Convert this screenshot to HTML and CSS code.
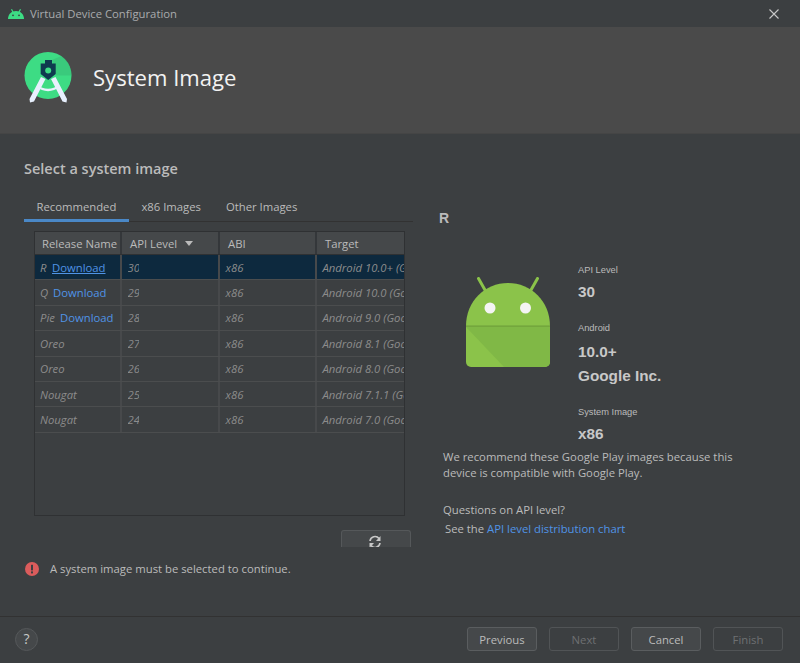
FILE: index.html
```html
<!DOCTYPE html>
<html lang="en">
<head>
    <meta charset="UTF-8">
    <meta name="viewport" content="width=device-width, initial-scale=1.0">
    <title>Virtual Device Configuration</title>
    <link rel="stylesheet" href="styles.css">
</head>
<body>
    <div class="dialog">
        <div class="titlebar">
            <svg class="titlebar-icon" viewBox="0 0 16 10" width="16" height="10">
                <path d="M0 10C0 5 3.500 2 8 2S16 5 16 10Z" fill="#3ddc84"/>
                <path d="M3.500 0.300 5.500 4M12.500 0.300 10.500 4" stroke="#3ddc84" stroke-width="1.200" fill="none"/>
                <circle cx="5" cy="6.300" r="0.900" fill="#3c3f41"/>
                <circle cx="11" cy="6.300" r="0.900" fill="#3c3f41"/>
            </svg>
            <span class="titlebar-text">Virtual Device Configuration</span>
            <svg class="close-icon" viewBox="0 0 10 10" width="10" height="10">
                <path d="M0.500 0.500 9.500 9.500M9.500 0.500 0.500 9.500" stroke="#c8c8c8" stroke-width="1.100" fill="none"/>
            </svg>
        </div>

        <div class="header">
            <svg class="logo" viewBox="0 0 48 51" width="48" height="51">
                <circle cx="24" cy="23.500" r="23.500" fill="#3ddc84"/>
                <path d="M28 8 37.500 4A23.500 23.500 0 0 1 47.500 23.500H32Z" fill="#37b874" opacity="0.5"/>
                <path d="M14.300 33C18 38 30 38 34 33L35 35C30 40.500 18 40.500 13.300 35Z" fill="#e8f0fe"/>
                <path d="M17 25 21.500 27 10 49.500 6 50.500 5.500 47ZM31.500 25 27 27 38.500 49.500 42.500 50.500 43 47Z" fill="#e8f0fe"/>
                <path d="M21 8H28V11.500H31.700V22L24.200 28 16.700 22V11.500H21Z" fill="#0f3a4f"/>
                <circle cx="24.200" cy="18.500" r="3" fill="#3ddc84"/>
            </svg>
            <h1>System Image</h1>
        </div>

        <div class="content">
            <div class="left-col">
                <h2>Select a system image</h2>
                <div class="tabs">
                    <span class="tab active">Recommended</span>
                    <span class="tab">x86 Images</span>
                    <span class="tab">Other Images</span>
                </div>
                <div class="table">
                    <div class="row head">
                        <div class="cell">Release Name</div>
                        <div class="cell">API Level <span class="sort-arrow"></span></div>
                        <div class="cell">ABI</div>
                        <div class="cell">Target</div>
                    </div>
                    <div class="row selected">
                        <div class="cell"><span class="clip w-r">R</span><a class="link underlined">Download</a></div>
                        <div class="cell"><span class="clip w-api">30</span></div>
                        <div class="cell">x86</div>
                        <div class="cell">Android 10.0+ (Google Play)</div>
                    </div>
                    <div class="row">
                        <div class="cell"><span class="clip w-q">Q</span><a class="link">Download</a></div>
                        <div class="cell"><span class="clip w-api">29</span></div>
                        <div class="cell">x86</div>
                        <div class="cell">Android 10.0 (Google Play)</div>
                    </div>
                    <div class="row">
                        <div class="cell"><span class="clip w-pie">Pie</span><a class="link">Download</a></div>
                        <div class="cell"><span class="clip w-api">28</span></div>
                        <div class="cell">x86</div>
                        <div class="cell">Android 9.0 (Google Play)</div>
                    </div>
                    <div class="row">
                        <div class="cell"><span class="clip w-oreo">Oreo</span></div>
                        <div class="cell"><span class="clip w-api">27</span></div>
                        <div class="cell">x86</div>
                        <div class="cell">Android 8.1 (Google Play)</div>
                    </div>
                    <div class="row">
                        <div class="cell"><span class="clip w-oreo">Oreo</span></div>
                        <div class="cell"><span class="clip w-api">26</span></div>
                        <div class="cell">x86</div>
                        <div class="cell">Android 8.0 (Google Play)</div>
                    </div>
                    <div class="row">
                        <div class="cell"><span class="clip w-nougat">Nougat</span></div>
                        <div class="cell"><span class="clip w-api">25</span></div>
                        <div class="cell">x86</div>
                        <div class="cell">Android 7.1.1 (Google Play)</div>
                    </div>
                    <div class="row">
                        <div class="cell"><span class="clip w-nougat">Nougat</span></div>
                        <div class="cell"><span class="clip w-api">24</span></div>
                        <div class="cell">x86</div>
                        <div class="cell">Android 7.0 (Google Play)</div>
                    </div>
                </div>
                <div class="refresh-row">
                    <div class="refresh-btn">
                        <svg viewBox="0 0 14 14" width="14" height="14">
                            <path d="M2 6A5 5 0 0 1 11 3.600" stroke="#c8c8c8" stroke-width="1.700" fill="none"/>
                            <path d="M12.500 1V6H8Z" fill="#c8c8c8"/>
                            <path d="M12 8A5 5 0 0 1 3 10.400" stroke="#c8c8c8" stroke-width="1.700" fill="none"/>
                            <path d="M1.500 13V8H6Z" fill="#c8c8c8"/>
                        </svg>
                    </div>
                </div>
                <div class="status">
                    <svg viewBox="0 0 14 14" width="14" height="14">
                        <circle cx="7" cy="7" r="7" fill="#db5c5c"/>
                        <rect x="6" y="2.800" width="2" height="5.600" fill="#3c3f41"/>
                        <rect x="6" y="9.400" width="2" height="2" fill="#3c3f41"/>
                    </svg>
                    <span>A system image must be selected to continue.</span>
                </div>
            </div>

            <div class="right-col">
                <div class="release-title">R</div>
                <div class="details">
                    <svg class="robot" viewBox="0 0 84 91" width="84" height="91">
                        <path d="M12.500 1.500 19 13M71.500 1.500 65 13" stroke="#8bc34a" stroke-width="3" stroke-linecap="round"/>
                        <path d="M0 49C0 24 19 6 42 6S84 24 84 49V85A5 5 0 0 1 79 90H5A5 5 0 0 1 0 85Z" fill="#8bc34a"/>
                        <path d="M0 49H84V85A5 5 0 0 1 79 90H38L0 50Z" fill="#80b846"/>
                        <rect x="0" y="48.500" width="84" height="1.200" fill="#6fa03a"/>
                        <circle cx="24" cy="31" r="5.500" fill="#f4f4f4"/>
                        <circle cx="59.500" cy="31" r="5.500" fill="#f4f4f4"/>
                    </svg>
                    <div class="info">
                        <div class="info-label">API Level</div>
                        <div class="info-value api-value">30</div>
                        <div class="info-label android-label">Android</div>
                        <div class="info-value version-value">10.0+</div>
                        <div class="info-value vendor">Google Inc.</div>
                        <div class="info-label image-label">System Image</div>
                        <div class="info-value api-value">x86</div>
                    </div>
                </div>
                <p class="recommend">We recommend these Google Play images because this device is compatible with Google Play.</p>
                <p class="questions">Questions on API level?</p>
                <p class="see">See the <a class="link">API level distribution chart</a></p>
            </div>
        </div>

        <div class="footer">
            <div class="help">?</div>
            <div class="buttons">
                <button class="btn">Previous</button>
                <button class="btn disabled">Next</button>
                <button class="btn">Cancel</button>
                <button class="btn disabled">Finish</button>
            </div>
        </div>
    </div>
</body>
</html>
```

FILE: styles.css
```css
* {
    margin: 0;
    padding: 0;
    box-sizing: border-box;
}

html, body {
    width: 800px;
    height: 663px;
    overflow: hidden;
}

body {
    font-family: "Open Sans", "Noto Sans", sans-serif;
    font-size: 11.300px;
    color: #bbbbbb;
    background: #3c3f41;
}

.dialog {
    height: 663px;
    display: flex;
    flex-direction: column;
}

.titlebar {
    height: 27px;
    display: flex;
    align-items: center;
    padding: 0 21px 0 8px;
    background: #3c3f41;
}

.titlebar-text {
    margin-left: 6px;
    font-size: 11.300px;
    color: #a9abad;
}

.close-icon {
    margin-left: auto;
}

.header {
    height: 107px;
    display: flex;
    align-items: center;
    padding: 0 0 6px 24px;
    background: #4a4a4a;
    border-bottom: 1px solid #454545;
}

.header h1 {
    margin-left: 21px;
    font-size: 22.100px;
    font-weight: 400;
    color: #f2f2f2;
}

.content {
    flex: 1;
    display: flex;
    min-height: 0;
}

.left-col {
    width: 413px;
    padding: 25px 0 0 24px;
}

.left-col h2 {
    font-size: 14.500px;
    font-weight: 600;
    color: #bbbbbb;
    line-height: 20px;
}

.tabs {
    display: flex;
    margin-top: 15px;
    height: 28px;
    border-bottom: 1px solid #323232;
}

.tab {
    padding: 0 12.500px;
    height: 28px;
    line-height: 26px;
    color: #bbbbbb;
}

.tab.active {
    border-bottom: 3px solid #4a88c7;
}

.table {
    margin: 9px 8px 0 10px;
    height: 285px;
    width: 371px;
    border: 1px solid #2f3133;
    overflow: hidden;
}

.row {
    display: grid;
    grid-template-columns: 87px 98px 97px 1fr;
    height: 25.400px;
    border-bottom: 1px solid #4b4d4e;
    color: #8c8c8c;
    font-style: italic;
}

.row.head {
    height: 23px;
    background: #45484a;
    border-bottom: 1px solid #2f3133;
    color: #bbbbbb;
    font-style: normal;
}

.row.selected {
    background: #0d293e;
}

.cell {
    display: flex;
    align-items: center;
    padding-left: 5.500px;
    border-right: 2px solid #47494b;
    white-space: nowrap;
    overflow: hidden;
}

.cell:first-child {
    padding-left: 5px;
}

.row.head .cell {
    padding-left: 8px;
    border-right-color: #34373a;
}

.row.head .cell:first-child {
    padding-left: 7px;
}

.cell:last-child {
    border-right: none;
}

.clip {
    display: inline-block;
    overflow: hidden;
    flex: none;
}

.w-r { width: 12px; }
.w-q { width: 13px; }
.w-pie { width: 20px; }
.w-oreo { width: 25px; }
.w-nougat { width: 38px; }
.w-api { width: 11px; }

.link {
    font-style: normal;
    color: #5094e6;
}

.link.underlined {
    text-decoration: underline;
}

.sort-arrow {
    margin-left: 8px;
    border-left: 4.500px solid transparent;
    border-right: 4.500px solid transparent;
    border-top: 5px solid #bbbbbb;
}

.refresh-row {
    display: flex;
    justify-content: flex-end;
    margin: 14px 2px 0 0;
}

.refresh-btn {
    width: 70px;
    height: 17px;
    overflow: hidden;
    display: flex;
    justify-content: center;
    padding: 4px 2px 0 0;
    background: #45484a;
    border: 1px solid #55585a;
    border-bottom: none;
    border-radius: 3px 3px 0 0;
}

.refresh-btn svg {
    flex: none;
}

.status {
    display: flex;
    align-items: center;
    gap: 11px;
    margin-top: 14px;
    padding-left: 1px;
}

.right-col {
    flex: 1;
    padding: 76px 0 0 26px;
}

.release-title {
    font-family: "Liberation Sans", sans-serif;
    font-weight: 700;
    font-size: 14px;
    line-height: 16px;
}

.details {
    display: flex;
    margin-top: 37px;
}

.robot {
    margin: 14px 0 0 27px;
    flex: none;
}

.info {
    margin-left: 28px;
    font-family: "Liberation Sans", sans-serif;
}

.info-label {
    font-size: 9.300px;
    line-height: 14px;
}

.info-value {
    font-size: 15.300px;
    font-weight: 700;
    line-height: 18px;
    color: #c8c8c8;
}

.api-value {
    margin-top: 6px;
}

.version-value {
    margin-top: 8px;
}

.vendor {
    margin-top: 6px;
}

.android-label {
    margin-top: 20px;
}

.image-label {
    margin-top: 20px;
}

.recommend {
    width: 310px;
    margin: 6px 0 0 4px;
    line-height: 16px;
}

.questions {
    margin: 21px 0 0 4px;
    line-height: 16px;
}

.see {
    margin: 3px 0 0 6px;
    line-height: 16px;
}

.footer {
    height: 47px;
    display: flex;
    align-items: center;
    padding: 0 17px 2px 15px;
    border-top: 1px solid #323232;
}

.help {
    width: 23px;
    height: 23px;
    border-radius: 50%;
    background: #45484a;
    border: 1px solid #55585a;
    text-align: center;
    font-size: 14px;
    line-height: 20px;
    color: #c8c8c8;
}

.buttons {
    display: flex;
    gap: 12px;
    margin-left: auto;
}

.btn {
    width: 70px;
    height: 24px;
    font-family: inherit;
    font-size: 11.300px;
    color: #bbbbbb;
    background: #45484a;
    border: 1px solid #5a5d5f;
    border-radius: 3px;
}

.btn.disabled {
    background: transparent;
    color: #6e7072;
    border-color: #515456;
}
```
